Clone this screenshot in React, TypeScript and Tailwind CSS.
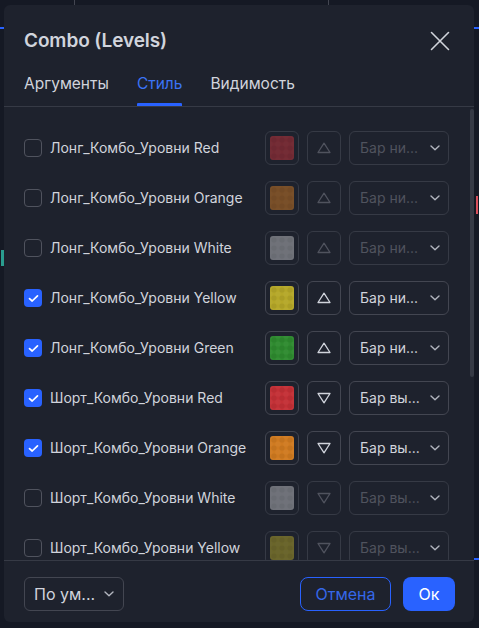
import React from "react";

type Row = {
  label: string;
  checked: boolean;
  color: string;
  dir: "up" | "down";
  pos: string;
};

const rows: Row[] = [
  { label: "Лонг_Комбо_Уровни Red", checked: false, color: "#c8323a", dir: "up", pos: "Бар ни..." },
  { label: "Лонг_Комбо_Уровни Orange", checked: false, color: "#d27a22", dir: "up", pos: "Бар ни..." },
  { label: "Лонг_Комбо_Уровни White", checked: false, color: "#bfc0c4", dir: "up", pos: "Бар ни..." },
  { label: "Лонг_Комбо_Уровни Yellow", checked: true, color: "#b5a728", dir: "up", pos: "Бар ни..." },
  { label: "Лонг_Комбо_Уровни Green", checked: true, color: "#2e8a2f", dir: "up", pos: "Бар ни..." },
  { label: "Шорт_Комбо_Уровни Red", checked: true, color: "#c33036", dir: "down", pos: "Бар вы..." },
  { label: "Шорт_Комбо_Уровни Orange", checked: true, color: "#cf7a20", dir: "down", pos: "Бар вы..." },
  { label: "Шорт_Комбо_Уровни White", checked: false, color: "#bfc0c4", dir: "down", pos: "Бар вы..." },
  { label: "Шорт_Комбо_Уровни Yellow", checked: false, color: "#b5a728", dir: "down", pos: "Бар вы..." },
];

function Chevron() {
  return (
    <svg width="12" height="8" viewBox="0 0 12 8" fill="none">
      <path d="M2 2 L6 5.8 L10 2" stroke="#b2b5be" strokeWidth="1.4" strokeLinecap="round" strokeLinejoin="round" />
    </svg>
  );
}

function Checkbox({ checked }: { checked: boolean }) {
  if (checked) {
    return (
      <div className="w-[18px] h-[18px] rounded-[4px] bg-[#2962ff] flex items-center justify-center shrink-0">
        <svg width="11" height="9" viewBox="0 0 11 9" fill="none">
          <path d="M1.5 4.6 L4.2 7 L9.5 1.8" stroke="#ffffff" strokeWidth="1.7" strokeLinecap="round" strokeLinejoin="round" />
        </svg>
      </div>
    );
  }
  return <div className="w-[18px] h-[18px] rounded-[4px] border border-[#50535e] shrink-0" />;
}

function Swatch({ color, enabled, id }: { color: string; enabled: boolean; id: string }) {
  return (
    <div
      className={`w-[34px] h-[34px] rounded-[6px] border flex items-center justify-center shrink-0 ${
        enabled ? "border-[#434651]" : "border-[#363a45]"
      }`}
    >
      <div className={`w-[24px] h-[24px] rounded-[3px] overflow-hidden ${enabled ? "" : "opacity-50"}`}>
        <svg width="24" height="24" viewBox="0 0 24 24">
          <defs>
            <pattern id={id} width="8" height="8" patternUnits="userSpaceOnUse">
              <circle cx="4" cy="4" r="2.6" fill="#000" opacity="0.06" />
              <circle cx="0" cy="0" r="2.6" fill="#fff" opacity="0.03" />
              <circle cx="8" cy="8" r="2.6" fill="#fff" opacity="0.03" />
              <circle cx="8" cy="0" r="2.6" fill="#fff" opacity="0.03" />
              <circle cx="0" cy="8" r="2.6" fill="#fff" opacity="0.03" />
            </pattern>
          </defs>
          <rect width="24" height="24" fill={color} />
          <rect width="24" height="24" fill={`url(#${id})`} />
        </svg>
      </div>
    </div>
  );
}

function Triangle({ dir, enabled }: { dir: "up" | "down"; enabled: boolean }) {
  const stroke = enabled ? "#d1d4dc" : "#50535e";
  return (
    <div
      className={`w-[34px] h-[34px] rounded-[6px] border flex items-center justify-center shrink-0 ${
        enabled ? "border-[#434651]" : "border-[#363a45]"
      }`}
    >
      <svg width="16" height="14" viewBox="0 0 16 14" fill="none">
        {dir === "up" ? (
          <path d="M8 2.2 L14 11.5 L2 11.5 Z" stroke={stroke} strokeWidth="1.3" strokeLinejoin="round" />
        ) : (
          <path d="M2 2.5 L14 2.5 L8 11.8 Z" stroke={stroke} strokeWidth="1.3" strokeLinejoin="round" />
        )}
      </svg>
    </div>
  );
}

function PosSelect({ text, enabled }: { text: string; enabled: boolean }) {
  return (
    <div
      className={`w-[100px] h-[34px] rounded-[6px] border flex items-center pl-[10px] pr-[7px] shrink-0 ${
        enabled ? "border-[#434651]" : "border-[#363a45]"
      }`}
    >
      <span className={`flex-1 text-[14px] leading-5 ${enabled ? "text-[#d1d4dc]" : "text-[#50535e]"}`}>{text}</span>
      <Chevron />
    </div>
  );
}

export default function App() {
  return (
    <div
      className="relative w-[479px] h-[628px] bg-[#151924] overflow-hidden"
      style={{ fontFamily: "Inter, 'Noto Sans', 'Liberation Sans', sans-serif" }}
    >
      {/* background chart fragments */}
      <div className="absolute left-0 top-[27px] w-[4px] h-[2px] bg-[#2962ff]" />
      <div className="absolute right-0 top-[27px] w-[5px] h-[2px] bg-[#2962ff]" />
      <div className="absolute right-0 top-[558px] w-[5px] h-[2px] bg-[#2962ff]" />
      <div className="absolute right-[1px] top-[196px] w-[2px] h-[18px] bg-[#d9505c]" />
      <div className="absolute left-[1px] top-[250px] w-[3px] h-[16px] bg-[#2a9d8f]" />
      <div className="absolute left-[74px] top-0 w-[1px] h-[5px] bg-[#434651]" />
      <div className="absolute left-[328px] top-0 w-[1px] h-[5px] bg-[#434651]" />

      <div className="pl-[4px] pt-[5px]">
        <div className="w-[470px] h-[617px] bg-[#1e222d] rounded-[6px] flex flex-col overflow-hidden">
          {/* header */}
          <div className="border-b border-[#363a45] shrink-0">
            <div className="flex items-center pl-[20px] pr-[24px] pt-[24px]">
              <div className="flex-1 text-[19px] leading-6 font-semibold text-[#d1d4dc] tracking-[-0.1px]">Combo (Levels)</div>
              <svg width="20" height="20" viewBox="0 0 20 20" fill="none">
                <path d="M1.5 1.5 L18.5 18.5 M18.5 1.5 L1.5 18.5" stroke="#d1d4dc" strokeWidth="1.6" strokeLinecap="round" />
              </svg>
            </div>
            <div className="flex pl-[20px] mt-[11px] gap-[28px]">
              <div className="h-[42px] pt-[8px] text-[15.5px] leading-6 text-[#d1d4dc]">Аргументы</div>
              <div className="relative h-[42px] pt-[8px] text-[15.5px] leading-6 text-[#3b74f6]">
                Стиль
                <div className="absolute left-0 right-0 bottom-0 h-[3px] bg-[#2962ff] rounded-t-[1px]" />
              </div>
              <div className="h-[42px] pt-[8px] text-[15.5px] leading-6 text-[#d1d4dc]">Видимость</div>
            </div>
          </div>

          {/* content */}
          <div className="relative flex-1 overflow-hidden">
            <div className="pt-[16px] pl-[20px] pr-[25px]">
              {rows.map((r, i) => (
                <div key={i} className="h-[50px] flex items-center">
                  <Checkbox checked={r.checked} />
                  <div className="flex-1 ml-[8px] text-[14px] leading-5 text-[#d1d4dc] whitespace-nowrap">{r.label}</div>
                  <div className="flex items-center gap-[8px]">
                    <Swatch color={r.color} enabled={r.checked} id={`pat${i}`} />
                    <Triangle dir={r.dir} enabled={r.checked} />
                    <PosSelect text={r.pos} enabled={r.checked} />
                  </div>
                </div>
              ))}
            </div>
            <div className="absolute right-0 top-[2px] w-[4px] h-[268px] rounded-full bg-[#363a45]" />
          </div>

          {/* footer */}
          <div className="border-t border-[#363a45] h-[62px] shrink-0 flex items-start pt-[16px] pl-[20px] pr-[19px]">
            <div className="w-[100px] h-[34px] rounded-[6px] border border-[#434651] flex items-center pl-[9px] pr-[8px]">
              <span className="flex-1 text-[16px] leading-6 text-[#d1d4dc]">По ум...</span>
              <Chevron />
            </div>
            <div className="flex-1" />
            <div className="w-[91px] h-[34px] rounded-[8px] border border-[#2962ff] flex items-center justify-center text-[16px] leading-6 text-[#3567e8]">
              Отмена
            </div>
            <div className="ml-[12px] w-[52px] h-[34px] rounded-[8px] bg-[#2962ff] flex items-center justify-center text-[16px] leading-6 text-white">
              Ок
            </div>
          </div>
        </div>
      </div>
    </div>
  );
}
